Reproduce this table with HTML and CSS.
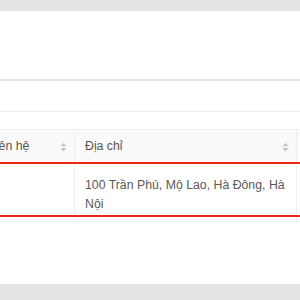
FILE: index.html
```html
<!DOCTYPE html>
<html lang="vi">
<head>
<meta charset="utf-8">
<title>Danh bạ</title>
<link rel="stylesheet" href="styles.css">
</head>
<body>
  <div class="page">
    <div class="topbar"></div>
    <div class="panel"></div>
    <div class="toolbar"></div>
    <div class="table-wrap">
      <div class="grid">
        <div class="th"><span>Liên hệ</span><svg class="sorter" viewBox="0 0 8 11"><path d="M4 0.5 L7.5 4.5 H0.5 Z"/><path d="M4 10.5 L7.5 6.5 H0.5 Z"/></svg></div>
        <div class="th"><span>Địa chỉ</span><svg class="sorter" viewBox="0 0 8 11"><path d="M4 0.5 L7.5 4.5 H0.5 Z"/><path d="M4 10.5 L7.5 6.5 H0.5 Z"/></svg></div>
        <div class="th"></div>
        <div class="td"></div>
        <div class="td">100 Trần Phú, Mộ Lao, Hà Đông, Hà Nội</div>
        <div class="td"></div>
      </div>
      <div class="row-highlight"></div>
    </div>
    <div class="spacer"></div>
    <div class="bottombar"></div>
  </div>
</body>
</html>
```
FILE: styles.css
```css
* { box-sizing: border-box; }

html, body {
  margin: 0;
  padding: 0;
  background: #ffffff;
}

body {
  font-family: "Liberation Sans", Arial, sans-serif;
  font-size: 12.3px;
  color: #595959;
  overflow: hidden;
}

.page {
  width: 300px;
  height: 300px;
  display: flex;
  flex-direction: column;
  overflow: hidden;
}

.topbar {
  height: 11px;
  flex: none;
  background: #e4e4e4;
}

.panel {
  height: 70px;
  flex: none;
  background: #ffffff;
  border-bottom: 2px solid #e2e2e2;
}

.toolbar {
  height: 31px;
  flex: none;
  border-bottom: 1px solid #ececec;
}

.table-wrap {
  position: relative;
  margin-top: 17px;
  flex: none;
  overflow: hidden;
}

.grid {
  display: grid;
  grid-template-columns: 96px 222px 120px;
  margin-left: -21px;
  border-top: 1px solid #efefef;
  border-bottom: 1px solid #efefef;
}

.th {
  display: flex;
  align-items: center;
  justify-content: space-between;
  padding: 7px 7px 7px 10px;
  min-height: 33px;
  line-height: 19px;
  background: #fafafa;
  color: #555;
  border-right: 1px solid #efefef;
  white-space: nowrap;
}

.td {
  padding: 11px 7px 8px 10px;
  line-height: 18.5px;
  border-right: 1px solid #efefef;
  margin-top: 2px;
}

.sorter {
  width: 7px;
  height: 10px;
  fill: #c4c4c4;
  flex: none;
}

.row-highlight {
  position: absolute;
  left: 0;
  right: 0;
  top: 33px;
  height: 55px;
  border-top: 2px solid #f2231b;
  border-bottom: 2px solid #f2231b;
  pointer-events: none;
}

.spacer {
  flex: 1;
}

.bottombar {
  height: 16px;
  flex: none;
  background: #e4e4e4;
}
```
